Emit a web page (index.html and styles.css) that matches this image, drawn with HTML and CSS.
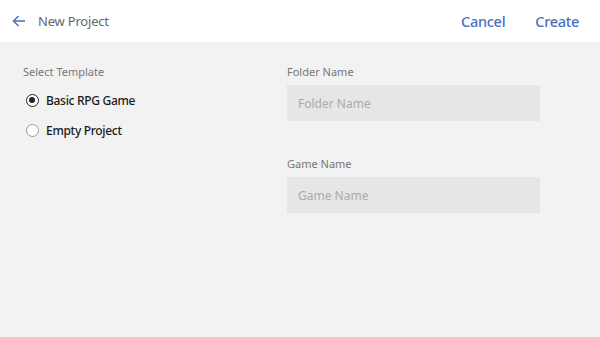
FILE: index.html
```html
<!DOCTYPE html>
<html lang="en">
<head>
  <meta charset="UTF-8" />
  <meta name="viewport" content="width=device-width, initial-scale=1.0"/>
  <title>New Project</title>
  <link rel="stylesheet" href="styles.css">
</head>
<body>
  <!-- Top bar -->
  <header class="topbar">
    <div class="topbar-left">
      <svg class="back-icon" width="14" height="12" viewBox="0 0 14 12">
        <path d="M13 6H1.5M6.5 1L1.5 6l5 5" fill="none" stroke="#4a6fc0" stroke-width="1.5"/>
      </svg>
      <span class="title">New Project</span>
    </div>
    <div class="topbar-actions">
      <button class="action">Cancel</button>
      <button class="action">Create</button>
    </div>
  </header>

  <main class="content">
    <section class="column templates">
      <div class="label">Select Template</div>
      <label class="radio-row">
        <input type="radio" name="template" checked>
        <span class="radio"></span>
        <span>Basic RPG Game</span>
      </label>
      <label class="radio-row">
        <input type="radio" name="template">
        <span class="radio"></span>
        <span>Empty Project</span>
      </label>
    </section>

    <section class="column fields">
      <div class="field">
        <div class="label">Folder Name</div>
        <input class="text-input" type="text" placeholder="Folder Name">
      </div>
      <div class="field">
        <div class="label">Game Name</div>
        <input class="text-input" type="text" placeholder="Game Name">
      </div>
    </section>
  </main>
</body>
</html>
```

FILE: styles.css
```css
/* Page */
body, html {
  margin: 0;
  padding: 0;
  height: 100%;
  background: #f2f2f2;
  font-family: 'Noto Sans', 'Open Sans', sans-serif;
  color: #222;
}

/* Top bar */
.topbar {
  height: 42px;
  background: #ffffff;
  display: flex;
  align-items: center;
  justify-content: space-between;
  padding: 0 21px 0 12px;
}
.topbar-left {
  display: flex;
  align-items: center;
  gap: 12px;
}
.back-icon {
  display: block;
}
.title {
  font-size: 13px;
  color: #666;
  letter-spacing: -0.2px;
}
.topbar-actions {
  display: flex;
  gap: 30px;
}
.action {
  background: none;
  border: none;
  padding: 0;
  font-family: inherit;
  font-size: 14.5px;
  font-weight: 500;
  letter-spacing: -0.3px;
  color: #4a6fc0;
  cursor: pointer;
}

/* Body columns */
.content {
  display: flex;
  padding: 22px 0 0 23px;
}
.column {
  display: flex;
  flex-direction: column;
}
.templates {
  width: 264px;
}
.fields {
  width: 253px;
  gap: 35px;
}
.label {
  font-size: 11px;
  color: #777;
  line-height: 16px;
}

/* Radios */
.radio-row {
  display: flex;
  align-items: center;
  gap: 7px;
  font-size: 12px;
  font-weight: 500;
  letter-spacing: -0.3px;
  color: #1a1a1a;
  height: 30px;
  padding-left: 3px;
  cursor: pointer;
}
.templates .label {
  margin-bottom: 5px;
}
.radio-row input {
  display: none;
}
.radio {
  box-sizing: border-box;
  width: 13px;
  height: 13px;
  border: 1px solid #999;
  border-radius: 50%;
  background: #fff;
  position: relative;
}
.radio-row input:checked + .radio {
  border: 1.5px solid #222;
}
.radio-row input:checked + .radio::after {
  content: '';
  position: absolute;
  top: 2px;
  left: 2px;
  width: 6px;
  height: 6px;
  border-radius: 50%;
  background: #222;
}

/* Text inputs */
.field .label {
  margin-bottom: 5px;
}
.text-input {
  box-sizing: border-box;
  width: 253px;
  height: 36px;
  border: none;
  background: #e6e6e6;
  padding: 0 11px;
  font-family: inherit;
  font-size: 12px;
  color: #333;
  outline: none;
}
.text-input::placeholder {
  color: #aaa;
}
```
